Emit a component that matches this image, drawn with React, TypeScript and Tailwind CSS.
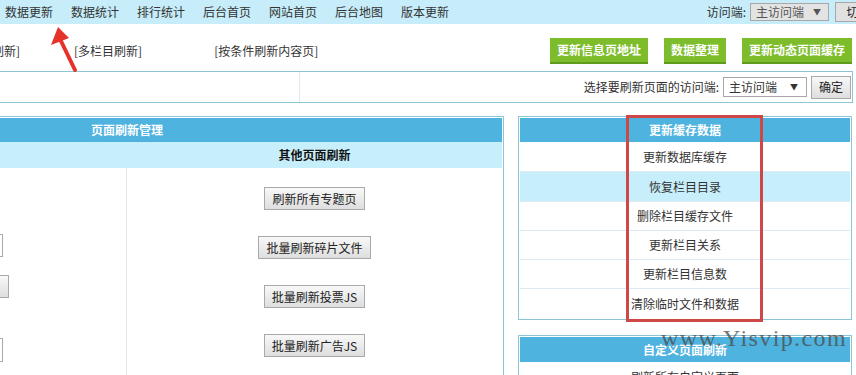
import React from "react";

const navItems = ["数据更新", "数据统计", "排行统计", "后台首页", "网站首页", "后台地图", "版本更新"];

const cacheRows = [
  { t: "更新数据库缓存", cls: "h-[30px] bg-white" },
  { t: "恢复栏目目录", cls: "h-[30px] bg-[#c7effb]" },
  { t: "删除栏目缓存文件", cls: "h-[29px] bg-white" },
  { t: "更新栏目关系", cls: "h-[29px] bg-white" },
  { t: "更新栏目信息数", cls: "h-[29px] bg-white" },
  { t: "清除临时文件和数据", cls: "h-[29px] bg-white" },
];

const otherButtons = ["刷新所有专题页", "批量刷新碎片文件", "批量刷新投票JS", "批量刷新广告JS", "批量刷新自定义页"];

function GrayBtn({ children, className = "" }: { children: React.ReactNode; className?: string }) {
  return (
    <button
      className={
        "flex h-[23px] items-center justify-center whitespace-nowrap border border-[#a9a9a9] bg-linear-to-b from-[#f8f8f8] to-[#dedede] px-[7px] text-[12px] leading-none text-[#222] " +
        className
      }
    >
      {children}
    </button>
  );
}

function GreenBtn({ children }: { children: React.ReactNode }) {
  return (
    <button className="flex h-[26px] items-center whitespace-nowrap border-b-2 border-[#5f9a1c] bg-[#7dbd2b] px-[7px] text-[12px] font-bold leading-none text-white">
      {children}
    </button>
  );
}

export default function App() {
  return (
    <div className="relative h-[375px] w-[856px] overflow-hidden bg-white font-['Noto_Sans_CJK_SC',sans-serif] text-[12px] text-[#333]">
      {/* top nav */}
      <div className="flex h-[24px] items-center bg-[#c6edf9]">
        <div className="flex gap-[18px] pl-[5px]">
          {navItems.map((n) => (
            <span key={n}>{n}</span>
          ))}
        </div>
        <div className="-mr-[26px] ml-auto flex items-center">
          <span>访问端:</span>
          <div className="ml-[4px] flex h-[18px] w-[79px] items-center justify-between border border-[#a8a8a8] bg-[#e3e3e3] pl-[5px] pr-[7px] leading-none text-[#555]">
            <span>主访问端</span>
            <span className="text-[8px]">▼</span>
          </div>
          <div className="ml-[6px] flex h-[20px] w-[47px] items-center justify-center border border-[#a8a8a8] bg-[#e1e1e1] leading-none text-[#222]">
            切换
          </div>
        </div>
      </div>

      {/* content, scrolled sideways */}
      <div className="overflow-hidden">
        <div className="-ml-[250px] w-[1106px]">
          {/* link row */}
          <div className="flex h-[47px] items-center pt-[7px]">
            <span className="w-[270px] text-right">[所有栏目刷新]</span>
            <span className="ml-[54px]">[多栏目刷新]</span>
            <span className="ml-[72px]">[按条件刷新内容页]</span>
            <div className="ml-auto mr-[4px] flex gap-[16px]">
              <GreenBtn>更新信息页地址</GreenBtn>
              <GreenBtn>数据整理</GreenBtn>
              <GreenBtn>更新动态页面缓存</GreenBtn>
            </div>
          </div>

          {/* select row */}
          <div className="flex h-[32px] w-[1103px] border-y border-r border-[#8cc5d6]">
            <div className="w-[550px] border-r border-[#dfe9ee]"></div>
            <div className="flex flex-1 items-center justify-end pr-[1px]">
              <span>选择要刷新页面的访问端:</span>
              <div className="ml-[4px] flex h-[20px] w-[84px] items-center justify-between border border-[#a8a8a8] bg-white pl-[5px] pr-[8px] leading-none">
                <span>主访问端</span>
                <span className="text-[8px]">▼</span>
              </div>
              <GrayBtn className="ml-[4px] w-[40px] px-[6px]">确定</GrayBtn>
            </div>
          </div>

          {/* panels */}
          <div className="mt-[13px] flex items-start">
            {/* left panel */}
            <div className="w-[754px] border border-[#8cc5d6] p-[1px]">
              <div className="flex h-[24px] items-center justify-center bg-[#4fb3df] font-bold text-white">
                页面刷新管理
              </div>
              <div className="grid h-[26px] grid-cols-2 items-center bg-[#c7effb] font-bold text-[#111]">
                <span className="text-center">栏目页面刷新</span>
                <span className="text-center">其他页面刷新</span>
              </div>
              <div className="grid grid-cols-2">
                <div className="flex h-[220px] flex-col border-r border-[#dfe9ee] pt-[66px]">
                  <div className="ml-[150px] h-[23px] w-[101px] border border-[#aaa] bg-white"></div>
                  <GrayBtn className="ml-[157px] mt-[18px] w-[100px]">刷新栏目页</GrayBtn>
                  <div className="ml-[150px] mt-[40px] h-[24px] w-[101px] border border-[#aaa] bg-white"></div>
                </div>
                <div className="flex flex-col items-center gap-[26px] pt-[19px]">
                  {otherButtons.map((b) => (
                    <GrayBtn key={b}>{b}</GrayBtn>
                  ))}
                </div>
              </div>
            </div>

            {/* right column */}
            <div className="ml-[14px] flex w-[334px] flex-col">
              <div className="border border-[#8cc5d6] p-[1px]">
                <div className="flex h-[24px] items-center justify-center bg-[#4fb3df] font-bold text-white">
                  更新缓存数据
                </div>
                {cacheRows.map((r, i) => (
                  <div
                    key={r.t}
                    className={
                      "flex items-center justify-center " +
                      r.cls +
                      (i < cacheRows.length - 1 ? " border-b border-[#dcebf1]" : "")
                    }
                  >
                    {r.t}
                  </div>
                ))}
              </div>
              <div className="mt-[15px] border border-[#8cc5d6] p-[1px]">
                <div className="flex h-[25px] items-center justify-center bg-[#4fb3df] font-bold text-white">
                  自定义页面刷新
                </div>
                <div className="flex h-[29px] items-center justify-center">刷新所有自定义页面</div>
              </div>
            </div>
          </div>
        </div>
      </div>

      {/* red highlight box */}
      <div className="absolute left-[626px] top-[115px] h-[207px] w-[137px] border-[3px] border-[#d04747]"></div>

      {/* watermark */}
      <div className="absolute left-[661px] top-[326px] font-['Liberation_Serif',serif] text-[24px] leading-none tracking-[1.4px] text-[#4a4a4a] opacity-75">
        www.Yisvip.com
      </div>

      {/* red arrow */}
      <svg className="absolute left-[48px] top-[24px]" width="36" height="50" viewBox="0 0 36 50">
        <polygon points="10,3 3,21 21,14" fill="#e5322b" />
        <line x1="12" y1="15" x2="27" y2="46" stroke="#e5322b" strokeWidth="4" strokeLinecap="round" />
      </svg>
    </div>
  );
}
